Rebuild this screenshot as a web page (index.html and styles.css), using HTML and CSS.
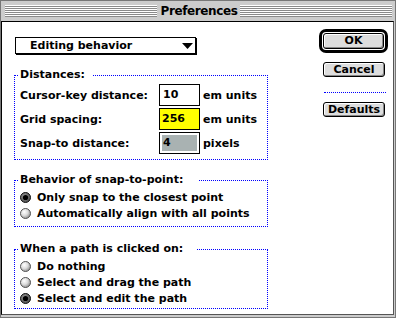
FILE: index.html
```html
<!DOCTYPE html>
<html>
<head>
<meta charset="utf-8">
<link rel="stylesheet" href="styles.css">
</head>
<body>
<div class="window">
  <div class="titlebar">
    <div class="stripes"></div>
    <div class="title">Preferences</div>
    <div class="stripes"></div>
  </div>
  <div class="content">
    <div class="left">
      <div class="popup">
        <span>Editing behavior</span>
        <svg class="tri" width="11" height="6" viewBox="0 0 11 6"><polygon points="0,0 11,0 5.5,6" fill="#000"/></svg>
      </div>

      <div class="group g1">
        <div class="gtitle t1">Distances:</div>
        <div class="rows">
          <div class="row">
            <span class="lbl">Cursor-key distance:</span>
            <span class="field">10</span>
            <span class="unit">em units</span>
          </div>
          <div class="row">
            <span class="lbl">Grid spacing:</span>
            <span class="field yellow">256</span>
            <span class="unit">em units</span>
          </div>
          <div class="row">
            <span class="lbl">Snap-to distance:</span>
            <span class="field disabled">4</span>
            <span class="unit">pixels</span>
          </div>
        </div>
      </div>

      <div class="group g2">
        <div class="gtitle t2">Behavior of snap-to-point:</div>
        <div class="radios">
          <div class="radio">
            <svg width="11" height="11" viewBox="0 0 11 11"><use href="#on"/></svg>
            <span>Only snap to the closest point</span>
          </div>
          <div class="radio">
            <svg width="11" height="11" viewBox="0 0 11 11"><use href="#off"/></svg>
            <span>Automatically align with all points</span>
          </div>
        </div>
      </div>

      <div class="group g3">
        <div class="gtitle t3">When a path is clicked on:</div>
        <div class="radios">
          <div class="radio">
            <svg width="11" height="11" viewBox="0 0 11 11"><use href="#off"/></svg>
            <span>Do nothing</span>
          </div>
          <div class="radio">
            <svg width="11" height="11" viewBox="0 0 11 11"><use href="#off"/></svg>
            <span>Select and drag the path</span>
          </div>
          <div class="radio">
            <svg width="11" height="11" viewBox="0 0 11 11"><use href="#on"/></svg>
            <span>Select and edit the path</span>
          </div>
        </div>
      </div>
    </div>

    <div class="right">
      <div class="ring"><div class="btn okbtn">OK</div></div>
      <div class="btn">Cancel</div>
      <div class="sep"></div>
      <div class="btn">Defaults</div>
    </div>
  </div>
</div>

<svg width="0" height="0" class="defs">
  <defs>
    <radialGradient id="goff" cx="0.38" cy="0.35" r="0.7">
      <stop offset="0" stop-color="#ffffff"/>
      <stop offset="0.5" stop-color="#dcdcdc"/>
      <stop offset="1" stop-color="#8a8a8a"/>
    </radialGradient>
    <radialGradient id="gon" cx="0.4" cy="0.38" r="0.7">
      <stop offset="0" stop-color="#9a9a9a"/>
      <stop offset="1" stop-color="#444444"/>
    </radialGradient>
    <g id="off">
      <circle cx="5.5" cy="5.5" r="5" fill="url(#goff)" stroke="#555" stroke-width="1"/>
    </g>
    <g id="on">
      <circle cx="5.5" cy="5.5" r="5" fill="url(#gon)" stroke="#111" stroke-width="1"/>
      <circle cx="5.5" cy="5.5" r="2.6" fill="#000"/>
    </g>
  </defs>
</svg>
</body>
</html>
```

FILE: styles.css
```css
html, body {
  margin: 0;
  padding: 0;
  background: #cccccc;
}

body {
  font-family: "DejaVu Sans", "Liberation Sans", sans-serif;
  font-weight: bold;
  font-size: 11px;
  color: #000;
}

.defs {
  position: absolute;
  width: 0;
  height: 0;
}

.window {
  box-sizing: border-box;
  width: 396px;
  height: 318px;
  background: #cccccc;
  border: 1px solid #777;
  padding: 0 1px 2px 0;
  display: flex;
  flex-direction: column;
}

.titlebar {
  height: 20px;
  flex: none;
  display: flex;
  align-items: center;
  padding: 0 2px 0 4px;
}

.stripes {
  flex: 1;
  height: 12px;
  background: repeating-linear-gradient(to bottom, #ffffff 0 1px, #8a8a8a 1px 2px);
}

.title {
  padding: 0 3px 0 4px;
  font-size: 12px;
  letter-spacing: -0.4px;
  line-height: 20px;
}

.content {
  flex: 1;
  background: #fff;
  border-top: 1px solid #000;
  border-left: 1px solid #000;
  border-right: 1px solid #555;
  border-bottom: 1px solid #555;
  display: flex;
  align-items: flex-start;
}

.left {
  width: 254px;
  padding: 15px 0 0 12px;
}

.popup {
  box-sizing: border-box;
  margin-left: 1px;
  width: 181px;
  height: 17px;
  border: 1px solid #000;
  box-shadow: 1px 1px 0 #000;
  display: flex;
  align-items: center;
  justify-content: space-between;
  padding: 0 2px 0 14px;
  line-height: 15px;
}

.group {
  box-sizing: border-box;
  width: 254px;
  border: 1px dotted #0000ff;
  padding: 0 0 5px 5px;
}

.g1 { margin-top: 21px; }
.g2 { margin-top: 20px; }
.g3 { margin-top: 22px; padding-bottom: 2px; }

.gtitle {
  width: fit-content;
  margin: -8px 0 0 -2px;
  padding: 0 8px 0 2px;
  background: #fff;
  line-height: 13px;
}

.t2 { padding-right: 16px; }
.t3 { padding-right: 14px; }

.rows {
  margin-top: 3px;
  display: flex;
  flex-direction: column;
  gap: 2px;
}

.row {
  display: flex;
  align-items: center;
  height: 22px;
}

.lbl {
  width: 139px;
}

.field {
  box-sizing: border-box;
  width: 41px;
  height: 22px;
  border: 1px solid #000;
  padding-left: 3px;
  line-height: 20px;
  background: #fff;
}

.field.yellow {
  background: #ffff00;
  padding-left: 2px;
}

.field.disabled {
  background: #a9b2b2;
  box-shadow: inset 0 0 0 2px #fff;
}

.unit {
  margin-left: 3px;
}

.radios {
  margin-top: 3px;
  display: flex;
  flex-direction: column;
}

.radio {
  display: flex;
  align-items: center;
  height: 16px;
  gap: 6px;
}

.radio svg {
  flex: none;
}

.right {
  margin-left: 51px;
  padding-top: 7px;
  width: 69px;
  display: flex;
  flex-direction: column;
  align-items: flex-start;
}

.ring {
  box-sizing: border-box;
  width: 69px;
  height: 24px;
  border: 3px solid #000;
  border-radius: 7px;
  padding: 1px;
}

.btn {
  box-sizing: border-box;
  width: 62px;
  height: 15px;
  margin-left: 4px;
  border: 1px solid #000;
  border-radius: 3px;
  background: #dddddd;
  box-shadow: inset 1px 1px 0 #fff, inset -1px -1px 0 #888;
  text-align: center;
  line-height: 13px;
}

.okbtn {
  width: 61px;
  height: 16px;
  margin-left: 0;
  line-height: 14px;
}

.ring + .btn {
  margin-top: 9px;
}

.sep {
  margin: 15px 0 0 5px;
  width: 62px;
  border-top: 1px dotted #0000ff;
}

.sep + .btn {
  margin-top: 9px;
}
```
